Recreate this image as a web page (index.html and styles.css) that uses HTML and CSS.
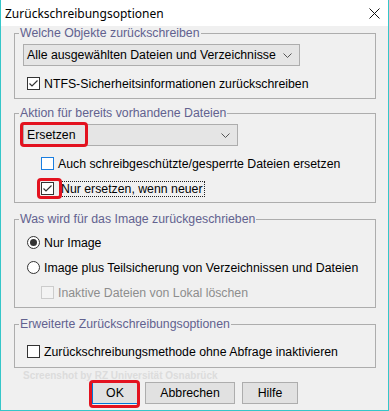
FILE: index.html
```html
<!DOCTYPE html>
<html lang="de">
<head>
<meta charset="utf-8">
<title>Zurückschreibungsoptionen</title>
<link rel="stylesheet" href="styles.css">
</head>
<body>
<div class="window">
  <div class="titlebar">
    <span class="title">Zurückschreibungsoptionen</span>
    <svg class="close" width="11" height="11" viewBox="0 0 11 11"><path d="M0.5 0.5L10.5 10.5M10.5 0.5L0.5 10.5" stroke="#111" stroke-width="1"/></svg>
  </div>
  <div class="content">
    <fieldset class="group g1">
      <legend>Welche Objekte zurückschreiben</legend>
      <div class="gbody">
        <div class="combo combo-wide"><span>Alle ausgewählten Dateien und Verzeichnisse</span><svg class="chev" width="9" height="5" viewBox="0 0 9 5"><path d="M0.5 0.5L4.5 4.5L8.5 0.5" fill="none" stroke="#555"/></svg></div>
        <div class="row first">
          <span class="check"><svg width="11" height="11" viewBox="0 0 11 11"><path d="M1.5 5.5L4 8L9.5 2.5" fill="none" stroke="#333" stroke-width="1.2"/></svg></span>
          <span class="lbl">NTFS-Sicherheitsinformationen zurückschreiben</span>
        </div>
      </div>
    </fieldset>

    <fieldset class="group g2">
      <legend>Aktion für bereits vorhandene Dateien</legend>
      <div class="gbody">
        <div class="combo combo-narrow"><span>Ersetzen</span><svg class="chev" width="9" height="5" viewBox="0 0 9 5"><path d="M0.5 0.5L4.5 4.5L8.5 0.5" fill="none" stroke="#555"/></svg><span class="mark mark-combo"></span></div>
        <div class="row first indent">
          <span class="check hover"></span>
          <span class="lbl">Auch schreibgeschützte/gesperrte Dateien ersetzen</span>
        </div>
        <div class="row indent">
          <span class="check"><svg width="11" height="11" viewBox="0 0 11 11"><path d="M1.5 5.5L4 8L9.5 2.5" fill="none" stroke="#333" stroke-width="1.2"/></svg><span class="mark mark-check"></span></span>
          <span class="lbl focus">Nur ersetzen, wenn neuer</span>
        </div>
      </div>
    </fieldset>

    <fieldset class="group g3">
      <legend>Was wird für das Image zurückgeschrieben</legend>
      <div class="gbody">
        <div class="row">
          <span class="radio on"></span>
          <span class="lbl">Nur Image</span>
        </div>
        <div class="row">
          <span class="radio"></span>
          <span class="lbl">Image plus Teilsicherung von Verzeichnissen und Dateien</span>
        </div>
        <div class="row indent">
          <span class="check disabled"></span>
          <span class="lbl dim">Inaktive Dateien von Lokal löschen</span>
        </div>
      </div>
    </fieldset>

    <fieldset class="group g4">
      <legend>Erweiterte Zurückschreibungsoptionen</legend>
      <div class="gbody">
        <div class="row">
          <span class="check"></span>
          <span class="lbl">Zurückschreibungsmethode ohne Abfrage inaktivieren</span>
        </div>
      </div>
    </fieldset>

    <div class="watermark">Screenshot by RZ Universität Osnabrück</div>

    <div class="buttons">
      <button class="btn btn-ok">OK<span class="mark mark-ok"></span></button>
      <button class="btn btn-cancel">Abbrechen</button>
      <button class="btn btn-help">Hilfe</button>
    </div>
  </div>
</div>
</body>
</html>
```

FILE: styles.css
```css
* { box-sizing: border-box; }

html, body {
  margin: 0;
  padding: 0;
  background: #ffffff;
}

.window {
  width: 389px;
  height: 411px;
  border: 1px solid #35c6c9;
  border-top: 0;
  background: #f0f0f0;
  font-family: "Liberation Sans", Arial, sans-serif;
  font-size: 12.3px;
  color: #000;
  display: flex;
  flex-direction: column;
  overflow: hidden;
}

.titlebar {
  height: 26px;
  flex: none;
  background: #ffffff;
  display: flex;
  align-items: center;
  justify-content: space-between;
  padding: 0 8px 0 4px;
}

.title {
  font-family: "Noto Sans", "Open Sans", sans-serif;
  font-size: 12px;
  color: #000;
}

.close { display: block; }

.content {
  flex: 1;
  padding: 0 12px 0 13px;
  display: flex;
  flex-direction: column;
}

.group {
  margin: 0;
  padding: 0;
  border: 1px solid #adadad;
  min-width: 0;
  flex: none;
}

.group legend {
  margin-left: 4px;
  padding: 0 1px;
  height: 15px;
  line-height: 15px;
  font-size: 12.3px;
  color: #62628f;
}

.g2 { margin-top: 7px; }
.g3 { margin-top: 9px; }
.g4 { margin-top: 9px; }

.g1 .gbody { padding: 3px 0 4px 8px; }
.g2 .gbody { padding: 3px 0 3px 8px; }
.g3 .gbody { padding: 5px 0 4px 8px; display: flex; flex-direction: column; gap: 4px; }
.g4 .gbody { padding: 9px 0 5px 8px; }

.combo {
  position: relative;
  height: 22px;
  border: 1px solid #adadad;
  background: #e5e5e5;
  display: flex;
  align-items: center;
  justify-content: space-between;
  padding: 0 7px 0 3px;
  white-space: nowrap;
}

.combo-wide { width: 277px; }
.combo-narrow { width: 215px; }

.chev { display: block; }

.row {
  height: 21px;
  display: flex;
  align-items: center;
  margin-top: 4px;
  padding-left: 4px;
}

.g3 .row,
.g4 .row { margin-top: 0; }

.row.first { margin-top: 7px; }
.row.indent { padding-left: 18px; }

.check {
  position: relative;
  width: 13px;
  height: 13px;
  flex: none;
  border: 1px solid #333333;
  background: #ffffff;
  display: flex;
  align-items: center;
  justify-content: center;
}

.check.hover { border-color: #1a7ee0; }
.check.disabled { border-color: #cccccc; background: #f3f3f3; }

.check svg { display: block; }

.radio {
  width: 13px;
  height: 13px;
  flex: none;
  border: 1px solid #333333;
  border-radius: 50%;
  background: #ffffff;
  display: flex;
  align-items: center;
  justify-content: center;
}

.radio.on::after {
  content: "";
  width: 7px;
  height: 7px;
  border-radius: 50%;
  background: #333333;
}

.lbl {
  margin-left: 4px;
  line-height: 14px;
  white-space: nowrap;
}

.lbl.focus {
  margin-left: 6px;
  border: 1px dotted #222;
  padding: 0 1px 0 0;
}

.lbl.dim { color: #8d8d8d; }

.watermark {
  flex: none;
  height: 14px;
  padding: 2px 0 0 9px;
  font-size: 10px;
  font-weight: bold;
  line-height: 11px;
  color: #dcdcdc;
  white-space: nowrap;
  overflow: hidden;
}

.buttons {
  flex: none;
  display: flex;
  justify-content: center;
  gap: 7px;
}

.btn {
  position: relative;
  height: 22px;
  border: 1px solid #adadad;
  background: #e1e1e1;
  font-family: "Liberation Sans", Arial, sans-serif;
  font-size: 12.3px;
  color: #000;
  padding: 0;
  margin: 0;
}

.btn-ok { width: 46px; border-color: #0078d7; }
.btn-cancel { width: 90px; }
.btn-help { width: 56px; }

.mark {
  position: absolute;
  border: 3px solid #e3121f;
  border-radius: 4px;
  pointer-events: none;
}

.mark-combo { left: -4px; top: -3px; width: 68px; height: 25px; }
.mark-check { left: -5px; top: -5px; width: 25px; height: 21px; }
.mark-ok { left: -4px; top: -3px; width: 51px; height: 28px; }
```
